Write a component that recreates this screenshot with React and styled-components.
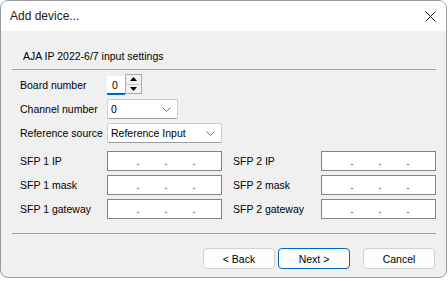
import React from 'react'
import styled, { createGlobalStyle } from 'styled-components'

const GlobalStyle = createGlobalStyle`
  html, body {
    margin: 0;
    padding: 0;
    background: #ffffff;
  }
  body {
    font-family: "Liberation Sans", Arial, sans-serif;
    font-size: 10.5px;
    color: #000;
  }
`

const Window = styled.div`
  width: 445px;
  height: 276px;
  border: 1px solid #9a9a9a;
  border-radius: 8px;
  overflow: hidden;
  background: #f0f0f0;
  display: flex;
  flex-direction: column;
`

const TitleBar = styled.div`
  height: 30px;
  background: #ffffff;
  display: flex;
  align-items: center;
  justify-content: space-between;
  padding: 0 10px 0 9px;
  font-size: 12px;
  color: #1a1a1a;
`

const Body = styled.div`
  flex: 1;
  padding: 0 10px 0 11px;
  display: flex;
  flex-direction: column;
`

const Heading = styled.div`
  height: 38px;
  display: flex;
  align-items: center;
  padding: 12px 0 0 11px;
  box-sizing: border-box;
`

const Separator = styled.div`
  height: 1px;
  background: #a0a0a0;
`

const Form = styled.div`
  display: grid;
  grid-template-columns: 87px 115px 11px 88px 115px;
  grid-template-rows: repeat(3, 20px) 0 repeat(3, 20px);
  row-gap: 4px;
  padding: 5px 0 0 8px;
  height: 163px;
  box-sizing: border-box;
  align-content: start;
`

const Label = styled.div`
  display: flex;
  align-items: center;
  white-space: nowrap;
  grid-column: ${p => p.col || '1'};
  grid-row: ${p => p.row};
`

const Spin = styled.div`
  display: flex;
  align-items: stretch;
  grid-column: 2 / 6;
  grid-row: 1;
`

const SpinField = styled.div`
  width: 18px;
  height: 19px;
  margin-top: 1px;
  background: #fff;
  border-bottom: 2px solid #0067c0;
  box-sizing: border-box;
  padding-left: 5px;
  display: flex;
  align-items: center;
`

const SpinButtons = styled.div`
  width: 17px;
  height: 20px;
  margin-top: -1px;
  border: 1px solid #adadad;
  box-sizing: border-box;
  display: flex;
  flex-direction: column;
  background: #f0f0f0;
`

const SpinHalf = styled.div`
  flex: 1;
  display: flex;
  align-items: center;
  justify-content: center;
  border-top: ${p => (p.down ? '1px solid #c8c8c8' : 'none')};
`

const Combo = styled.div`
  width: ${p => p.w}px;
  height: 20px;
  background: #fff;
  border: 1px solid #cdcdcd;
  border-bottom-color: #9a9a9a;
  border-radius: 2px;
  box-sizing: border-box;
  display: flex;
  align-items: center;
  justify-content: space-between;
  padding: 0 6px 0 3px;
  grid-column: 2 / 6;
  grid-row: ${p => p.row};
`

const IpBox = styled.div`
  height: 20px;
  background: #fff;
  border: 1px solid #848484;
  box-sizing: border-box;
  display: flex;
  align-items: flex-end;
  padding: 0 0 4px 4px;
  grid-column: ${p => p.col};
  grid-row: ${p => p.row};
`

const Octet = styled.span`
  width: 24px;
`

const Dot = styled.span`
  width: 4px;
  text-align: center;
  line-height: 10px;
`

const Footer = styled.div`
  display: flex;
  justify-content: flex-end;
  align-items: center;
  padding: 14px 0 0 0;
  gap: 3px;
`

const Button = styled.button`
  width: 72px;
  height: 21px;
  font-family: inherit;
  font-size: 10.5px;
  color: #000;
  background: #fdfdfd;
  border: 1px solid ${p => (p.primary ? '#0067c0' : '#d0d0d0')};
  border-radius: 4px;
  padding: 0;
  margin-left: ${p => (p.gap ? `${p.gap}px` : 0)};
  margin-right: ${p => (p.last ? '1px' : 0)};
`

const Chevron = () => (
  <svg width="9" height="5" viewBox="0 0 9 5">
    <path d="M0.5 0.5 L4.5 4.5 L8.5 0.5" fill="none" stroke="#707070" strokeWidth="1" />
  </svg>
)

const CloseIcon = () => (
  <svg width="11" height="11" viewBox="0 0 11 11">
    <path d="M0.5 0.5 L10.5 10.5 M10.5 0.5 L0.5 10.5" stroke="#1a1a1a" strokeWidth="1" />
  </svg>
)

const Arrow = ({ down }) => (
  <svg width="7" height="4" viewBox="0 0 7 4">
    <path d={down ? 'M0 0 H7 L3.5 4 Z' : 'M0 4 H7 L3.5 0 Z'} fill="#000" />
  </svg>
)

const IpField = ({ col, row }) => (
  <IpBox col={col} row={row}>
    <Octet /><Dot>.</Dot><Octet /><Dot>.</Dot><Octet /><Dot>.</Dot><Octet />
  </IpBox>
)

const sfpRows = ['IP', 'mask', 'gateway']

const App = () => (
  <>
    <GlobalStyle />
    <Window>
      <TitleBar>
        <span>Add device...</span>
        <CloseIcon />
      </TitleBar>
      <Body>
        <Heading>AJA IP 2022-6/7 input settings</Heading>
        <Separator />
        <Form>
          <Label row={1}>Board number</Label>
          <Spin>
            <SpinField>0</SpinField>
            <SpinButtons>
              <SpinHalf><Arrow /></SpinHalf>
              <SpinHalf down><Arrow down /></SpinHalf>
            </SpinButtons>
          </Spin>

          <Label row={2}>Channel number</Label>
          <Combo w={71} row={2}>
            <span>0</span>
            <Chevron />
          </Combo>

          <Label row={3}>Reference source</Label>
          <Combo w={115} row={3}>
            <span>Reference Input</span>
            <Chevron />
          </Combo>

          {sfpRows.map((name, i) => (
            <React.Fragment key={name}>
              <Label col="1" row={i + 5}>SFP 1 {name}</Label>
              <IpField col="2" row={i + 5} />
              <Label col="4" row={i + 5}>SFP 2 {name}</Label>
              <IpField col="5" row={i + 5} />
            </React.Fragment>
          ))}
        </Form>
        <Separator />
        <Footer>
          <Button>&lt; Back</Button>
          <Button primary>Next &gt;</Button>
          <Button gap={10} last>Cancel</Button>
        </Footer>
      </Body>
    </Window>
  </>
)

export default App
